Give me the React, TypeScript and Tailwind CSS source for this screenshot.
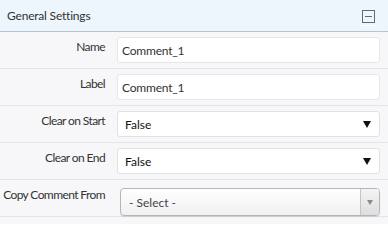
import React from "react";

const font = { fontFamily: "Lato, 'Liberation Sans', sans-serif" };

function Row({ label, children, last }: { label: string; children: React.ReactNode; last?: boolean }) {
  return (
    <div className="flex border-b border-[#e4e5e8]">
      <div className="w-[117px] shrink-0 pr-[12px] pt-[8px] text-right text-[12px] leading-[14px] tracking-[-0.6px] text-[#333] whitespace-nowrap">
        {label}
      </div>
      <div className={"flex-1 pr-[8px] " + (last ? "pt-[8px] pb-0" : "py-[5px]")}>{children}</div>
    </div>
  );
}

function TextInput({ value }: { value: string }) {
  return (
    <div className="h-[26px] rounded-[3px] border border-[#e6e7ea] bg-white pl-[4px] flex items-center pt-[2px] text-[12px] tracking-[-0.2px] text-[#333]">
      {value}
    </div>
  );
}

function Select({ value }: { value: string }) {
  return (
    <div className="h-[26px] rounded-[3px] border border-[#e0e1e4] bg-white pl-[7px] pr-[8px] flex items-center justify-between pt-[2px] text-[12px] text-[#111]">
      <span>{value}</span>
      <svg width="8" height="7" viewBox="0 0 8 7" className="mb-[1px]">
        <polygon points="0,0 8,0 4,7" fill="#111" />
      </svg>
    </div>
  );
}

export default function App() {
  return (
    <div className="w-[388px] h-[224px] bg-[#f7f7f9] overflow-hidden" style={font}>
      <div className="h-[32px] bg-[#edf5fd] border-b border-[#b9c3cd] flex items-center justify-between pl-[7px] pr-[11px]">
        <span className="text-[12px] tracking-[-0.2px] text-[#333]">General Settings</span>
        <div className="flex flex-col items-center gap-[2px] mt-[4px]">
          <div className="w-[13px] h-[13px] border border-[#5f6a78] flex items-center justify-center">
            <div className="w-[7px] h-[1px] bg-[#5f6a78]" />
          </div>
          <div className="w-[17px] h-[1px] bg-white" />
        </div>
      </div>
      <Row label="Name">
        <TextInput value="Comment_1" />
      </Row>
      <Row label="Label">
        <TextInput value="Comment_1" />
      </Row>
      <Row label="Clear on Start">
        <Select value="False" />
      </Row>
      <Row label="Clear on End">
        <Select value="False" />
      </Row>
      <Row label="Copy Comment From" last>
        <div className="ml-[3px] h-[28px] rounded-[4px] border border-[#b5b5b5] bg-gradient-to-b from-white to-[#f0f0f0] flex shadow-[0_1px_1px_rgba(0,0,0,0.1)]">
          <div className="flex-1 pl-[8px] flex items-center pt-[1px] text-[12px] text-[#444]">- Select -</div>
          <div className="w-[19px] border-l border-[#c4c4c4] bg-gradient-to-b from-[#f4f4f4] to-[#dedede] rounded-r-[3px] flex items-center justify-center">
            <svg width="6" height="5" viewBox="0 0 6 5">
              <polygon points="0,0 6,0 3,5" fill="#8a8a8a" />
            </svg>
          </div>
        </div>
      </Row>
    </div>
  );
}
